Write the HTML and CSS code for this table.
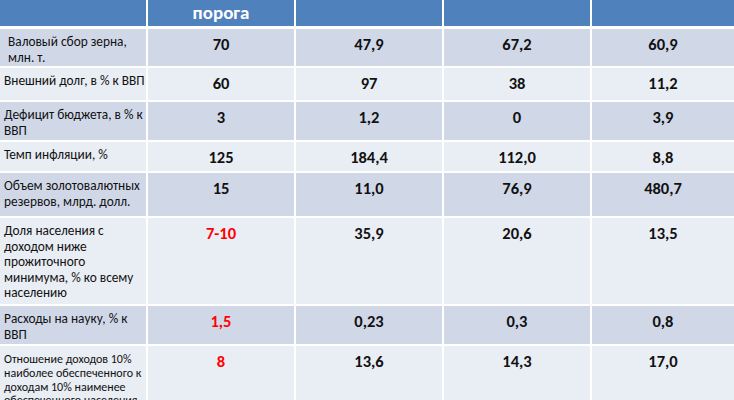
FILE: index.html
```html
<!DOCTYPE html>
<html lang="ru">
<head>
    <meta charset="UTF-8">
    <meta name="viewport" content="width=device-width, initial-scale=1.0">
    <title>Пороговые значения</title>
    <link rel="stylesheet" href="styles.css">
</head>
<body>
    <div class="sheet">
        <div class="row head">
            <div></div>
            <div>порога</div>
            <div></div>
            <div></div>
            <div></div>
        </div>
        <div class="row dark h-grain">
            <div class="label indent">Валовый сбор зерна,<br>млн. т.</div>
            <div class="num">70</div>
            <div class="num">47,9</div>
            <div class="num">67,2</div>
            <div class="num">60,9</div>
        </div>
        <div class="row light h-debt">
            <div class="label">Внешний долг, в % к ВВП</div>
            <div class="num">60</div>
            <div class="num">97</div>
            <div class="num">38</div>
            <div class="num">11,2</div>
        </div>
        <div class="row dark h-deficit">
            <div class="label">Дефицит бюджета, в % к<br>ВВП</div>
            <div class="num">3</div>
            <div class="num">1,2</div>
            <div class="num">0</div>
            <div class="num">3,9</div>
        </div>
        <div class="row light h-inflation">
            <div class="label">Темп инфляции, %</div>
            <div class="num">125</div>
            <div class="num">184,4</div>
            <div class="num">112,0</div>
            <div class="num">8,8</div>
        </div>
        <div class="row dark h-reserves">
            <div class="label">Объем золотовалютных<br>резервов, млрд. долл.</div>
            <div class="num">15</div>
            <div class="num">11,0</div>
            <div class="num">76,9</div>
            <div class="num">480,7</div>
        </div>
        <div class="row light h-poverty">
            <div class="label">Доля населения с<br>доходом ниже<br>прожиточного<br>минимума, % ко всему<br>населению</div>
            <div class="num red">7-10</div>
            <div class="num">35,9</div>
            <div class="num">20,6</div>
            <div class="num">13,5</div>
        </div>
        <div class="row dark h-science">
            <div class="label">Расходы на науку, % к<br>ВВП</div>
            <div class="num red">1,5</div>
            <div class="num">0,23</div>
            <div class="num">0,3</div>
            <div class="num">0,8</div>
        </div>
        <div class="row light h-ratio">
            <div class="label small">Отношение доходов 10%<br>наиболее обеспеченного к<br>доходам 10% наименее<br>обеспеченного населения</div>
            <div class="num red">8</div>
            <div class="num">13,6</div>
            <div class="num">14,3</div>
            <div class="num">17,0</div>
        </div>
    </div>
</body>
</html>
```

FILE: styles.css
```css
body {
    margin: 0;
    height: 400px;
    overflow: hidden;
    background: #fff;
    font-family: Calibri, Carlito, 'Open Sans', sans-serif;
    color: #111;
}

.sheet {
    display: flex;
    flex-direction: column;
    gap: 2px;
}

.row {
    display: grid;
    grid-template-columns: 146px 146px 146px 146px 1fr;
    column-gap: 2px;
}

.row.dark > div {
    background: #d0d8e8;
}

.row.light > div {
    background: #e9edf4;
}

.head {
    height: 26px;
    margin-bottom: 1px;
}

.head > div {
    background: #4f81bd;
    color: #fff;
    font-weight: bold;
    font-size: 19px;
    line-height: 22px;
    text-align: center;
    padding-top: 2px;
}

.h-grain { height: 37px; }
.h-debt { height: 32px; }
.h-deficit { height: 38px; }
.h-inflation { height: 29px; }
.h-reserves { height: 43px; }
.h-poverty { height: 86px; }
.h-science { height: 38px; }
.h-ratio { height: 70px; }

.label {
    padding: 5px 0 0 4px;
    font-size: 13.33px;
    line-height: 15.5px;
    white-space: nowrap;
}

.label.indent {
    padding-left: 8px;
}

.label.small {
    padding-top: 7px;
    font-size: 12px;
    line-height: 13.8px;
}

.num {
    padding-top: 5px;
    text-align: center;
    font-weight: bold;
    font-size: 16.5px;
    line-height: 20px;
}

.num.red {
    color: #f00;
}
```
